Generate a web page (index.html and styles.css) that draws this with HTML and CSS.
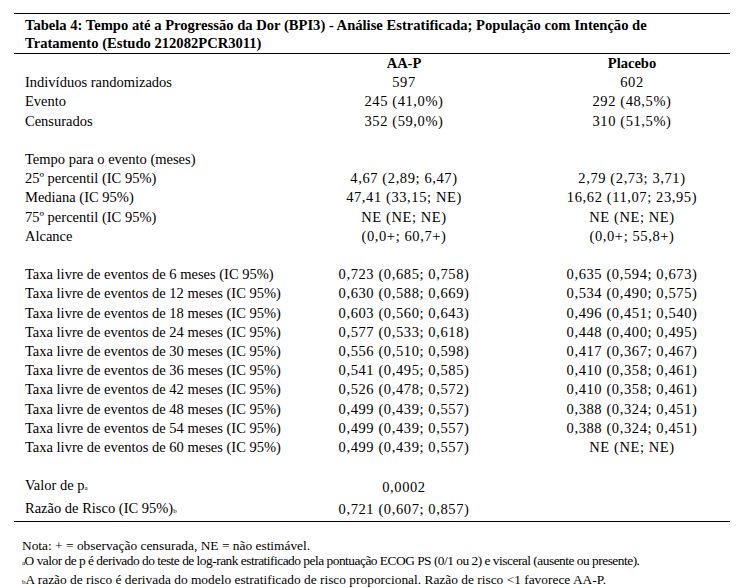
FILE: index.html
```html
<!DOCTYPE html>
<html lang="pt">
<head>
<meta charset="utf-8">
<title>Tabela 4</title>
<link rel="stylesheet" href="styles.css">
</head>
<body>
<div class="page">
  <div class="title">Tabela 4: Tempo até a Progressão da Dor (BPI3) - Análise Estratificada; População com Intenção de<br>Tratamento (Estudo 212082PCR3011)</div>
  <table class="data">
    <colgroup><col class="c-label"><col class="c-a"><col class="c-b"></colgroup>
    <thead>
      <tr><th></th><th>AA-P</th><th>Placebo</th></tr>
    </thead>
    <tbody>
      <tr><td>Indivíduos randomizados</td><td>597</td><td>602</td></tr>
      <tr><td>Evento</td><td>245 (41,0%)</td><td>292 (48,5%)</td></tr>
      <tr><td>Censurados</td><td>352 (59,0%)</td><td>310 (51,5%)</td></tr>
      <tr class="blank"><td></td><td></td><td></td></tr>
      <tr><td>Tempo para o evento (meses)</td><td></td><td></td></tr>
      <tr><td>25º percentil (IC 95%)</td><td>4,67 (2,89; 6,47)</td><td>2,79 (2,73; 3,71)</td></tr>
      <tr><td>Mediana (IC 95%)</td><td>47,41 (33,15; NE)</td><td>16,62 (11,07; 23,95)</td></tr>
      <tr><td>75º percentil (IC 95%)</td><td>NE (NE; NE)</td><td>NE (NE; NE)</td></tr>
      <tr><td>Alcance</td><td>(0,0+; 60,7+)</td><td>(0,0+; 55,8+)</td></tr>
      <tr class="blank"><td></td><td></td><td></td></tr>
      <tr><td>Taxa livre de eventos de 6 meses (IC 95%)</td><td>0,723 (0,685; 0,758)</td><td>0,635 (0,594; 0,673)</td></tr>
      <tr><td>Taxa livre de eventos de 12 meses (IC 95%)</td><td>0,630 (0,588; 0,669)</td><td>0,534 (0,490; 0,575)</td></tr>
      <tr><td>Taxa livre de eventos de 18 meses (IC 95%)</td><td>0,603 (0,560; 0,643)</td><td>0,496 (0,451; 0,540)</td></tr>
      <tr><td>Taxa livre de eventos de 24 meses (IC 95%)</td><td>0,577 (0,533; 0,618)</td><td>0,448 (0,400; 0,495)</td></tr>
      <tr><td>Taxa livre de eventos de 30 meses (IC 95%)</td><td>0,556 (0,510; 0,598)</td><td>0,417 (0,367; 0,467)</td></tr>
      <tr><td>Taxa livre de eventos de 36 meses (IC 95%)</td><td>0,541 (0,495; 0,585)</td><td>0,410 (0,358; 0,461)</td></tr>
      <tr><td>Taxa livre de eventos de 42 meses (IC 95%)</td><td>0,526 (0,478; 0,572)</td><td>0,410 (0,358; 0,461)</td></tr>
      <tr><td>Taxa livre de eventos de 48 meses (IC 95%)</td><td>0,499 (0,439; 0,557)</td><td>0,388 (0,324; 0,451)</td></tr>
      <tr><td>Taxa livre de eventos de 54 meses (IC 95%)</td><td>0,499 (0,439; 0,557)</td><td>0,388 (0,324; 0,451)</td></tr>
      <tr><td>Taxa livre de eventos de 60 meses (IC 95%)</td><td>0,499 (0,439; 0,557)</td><td>NE (NE; NE)</td></tr>
      <tr class="blank"><td></td><td></td><td></td></tr>
      <tr><td>Valor de p<span class="mark">a</span></td><td>0,0002</td><td></td></tr>
      <tr class="last"><td>Razão de Risco (IC 95%)<span class="mark">b</span></td><td>0,721 (0,607; 0,857)</td><td></td></tr>
    </tbody>
  </table>
  <div class="notes">
    <p>Nota: + = observação censurada, NE = não estimável.</p>
    <p class="tight"><span class="mark">a</span>O valor de p é derivado do teste de log-rank estratificado pela pontuação ECOG PS (0/1 ou 2) e visceral (ausente ou presente).</p>
    <p><span class="mark">b</span>A razão de risco é derivada do modelo estratificado de risco proporcional. Razão de risco &lt;1 favorece AA-P.</p>
  </div>
</div>
</body>
</html>
```
FILE: styles.css
```css
html, body {
  margin: 0;
  padding: 0;
  background: #fff;
}
body {
  font-family: "Liberation Serif", "Times New Roman", serif;
  color: #000;
  font-size: 14.5px;
}
.page {
  width: 716px;
  margin-left: 14px;
  padding-top: 13px;
}
.title {
  border-top: 1px solid #000;
  border-bottom: 1px solid #000;
  font-weight: bold;
  font-size: 14.6px;
  line-height: 18px;
  padding: 2px 0 1px 11px;
  white-space: nowrap;
}
.data {
  width: 100%;
  table-layout: fixed;
  border-collapse: collapse;
  border-bottom: 1px solid #000;
}
.c-label { width: 270px; }
.c-a { width: 250px; }
.c-b { width: 196px; }
.data th, .data td {
  padding: 0;
  height: 19.2px;
  line-height: 19.2px;
  white-space: nowrap;
  vertical-align: middle;
}
.data th {
  font-weight: bold;
  text-align: center;
}
.data th:nth-child(2),
.data td:nth-child(2) {
  padding-right: 10px;
}
.data td:first-child {
  padding-left: 11px;
  text-align: left;
}
.data td + td {
  text-align: center;
  letter-spacing: 0.6px;
}
.mark {
  font-size: 7px;
  vertical-align: baseline;
}
.notes {
  padding-top: 16px;
  padding-left: 8px;
  font-size: 13.4px;
  line-height: 15.5px;
}
.notes p {
  margin: 0;
  white-space: nowrap;
}
.notes .tight {
  letter-spacing: -0.5px;
}
```
